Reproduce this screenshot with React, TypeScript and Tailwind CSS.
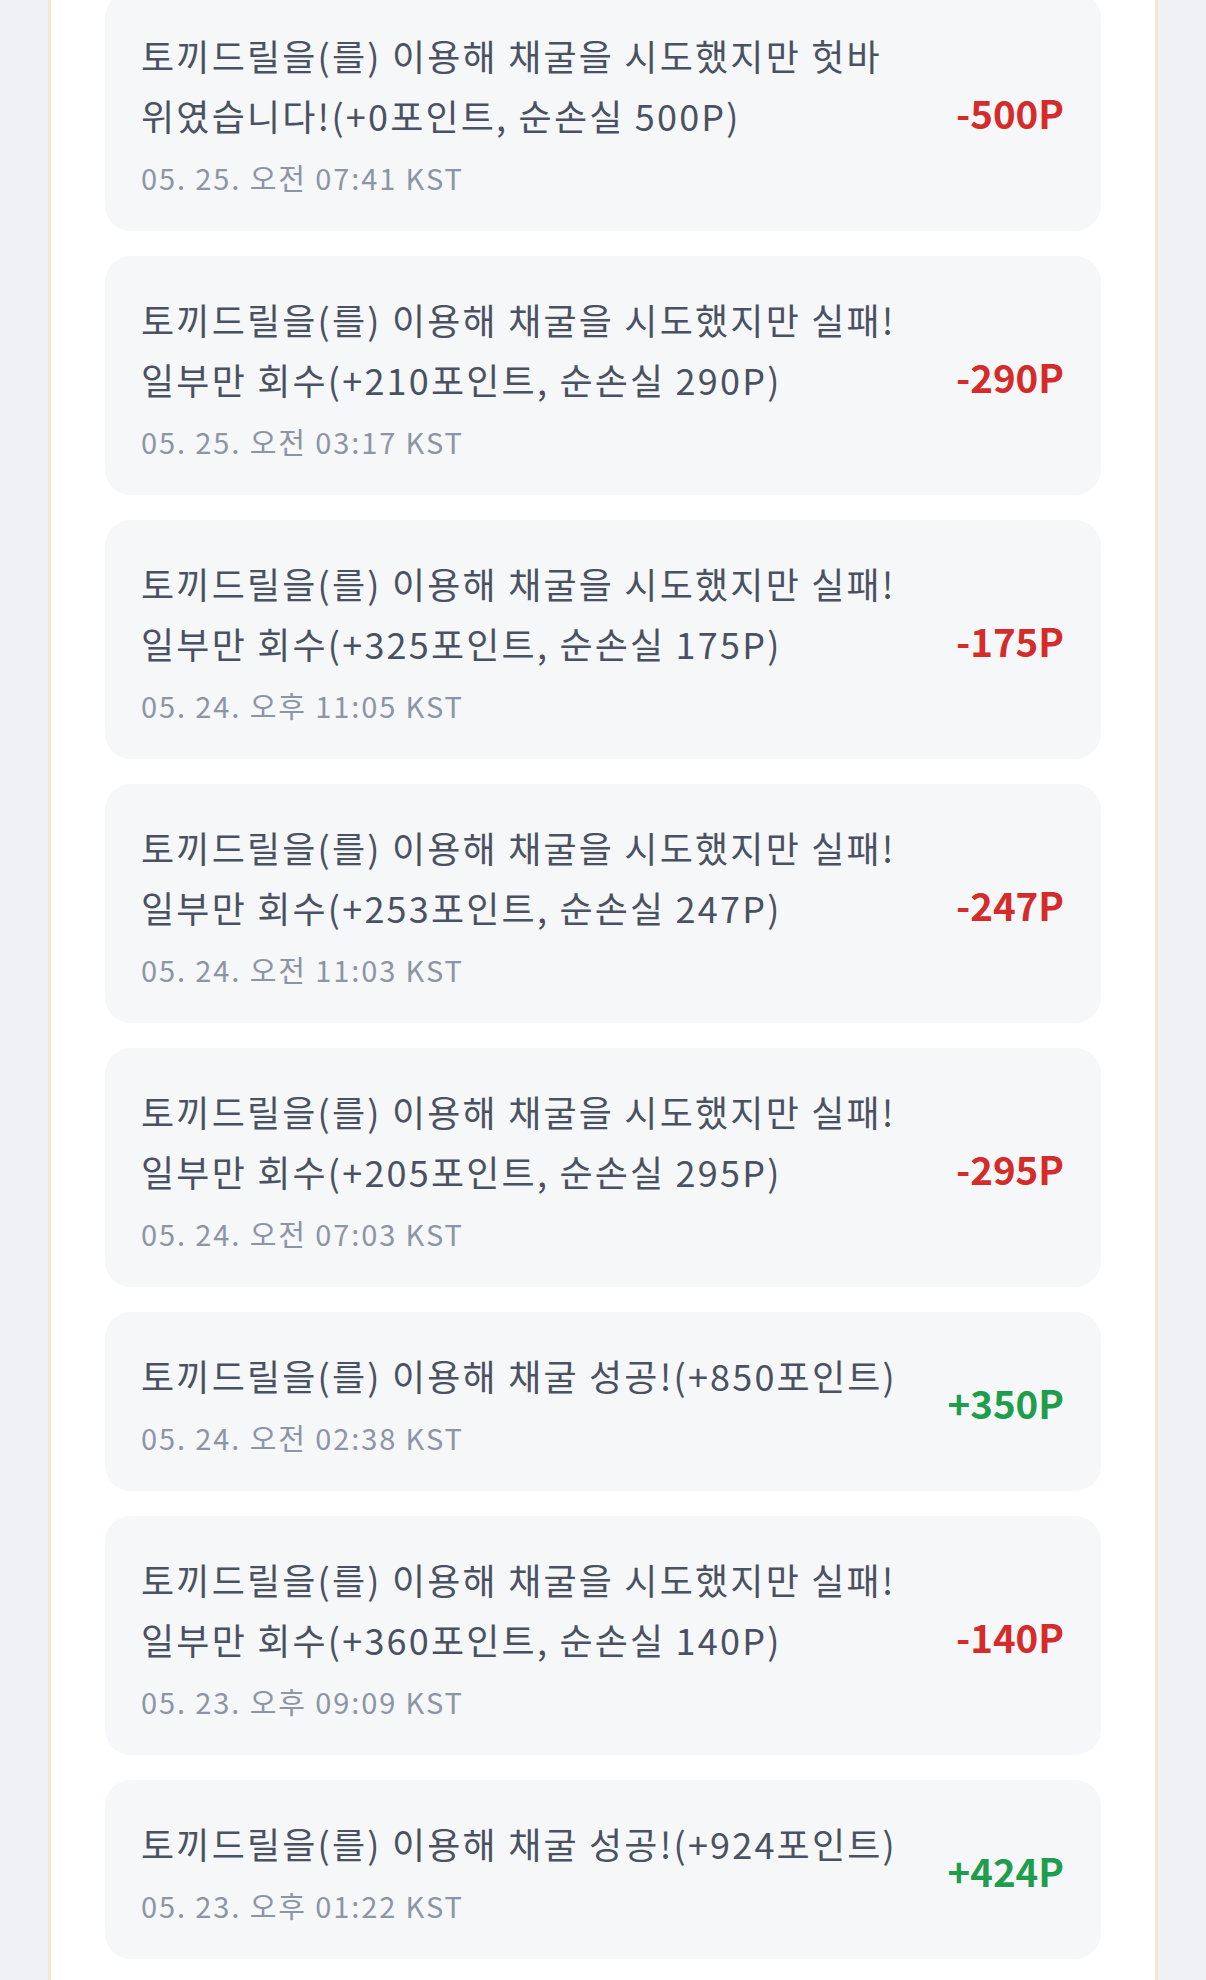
import React from "react";

type Item = { text: string; date: string; amount: string; positive: boolean };

const items: Item[] = [
  { text: "토끼드릴을(를) 이용해 채굴을 시도했지만 헛바위였습니다!(+0포인트, 순손실 500P)", date: "05. 25. 오전 07:41 KST", amount: "-500P", positive: false },
  { text: "토끼드릴을(를) 이용해 채굴을 시도했지만 실패! 일부만 회수(+210포인트, 순손실 290P)", date: "05. 25. 오전 03:17 KST", amount: "-290P", positive: false },
  { text: "토끼드릴을(를) 이용해 채굴을 시도했지만 실패! 일부만 회수(+325포인트, 순손실 175P)", date: "05. 24. 오후 11:05 KST", amount: "-175P", positive: false },
  { text: "토끼드릴을(를) 이용해 채굴을 시도했지만 실패! 일부만 회수(+253포인트, 순손실 247P)", date: "05. 24. 오전 11:03 KST", amount: "-247P", positive: false },
  { text: "토끼드릴을(를) 이용해 채굴을 시도했지만 실패! 일부만 회수(+205포인트, 순손실 295P)", date: "05. 24. 오전 07:03 KST", amount: "-295P", positive: false },
  { text: "토끼드릴을(를) 이용해 채굴 성공!(+850포인트)", date: "05. 24. 오전 02:38 KST", amount: "+350P", positive: true },
  { text: "토끼드릴을(를) 이용해 채굴을 시도했지만 실패! 일부만 회수(+360포인트, 순손실 140P)", date: "05. 23. 오후 09:09 KST", amount: "-140P", positive: false },
  { text: "토끼드릴을(를) 이용해 채굴 성공!(+924포인트)", date: "05. 23. 오후 01:22 KST", amount: "+424P", positive: true },
];

export default function App() {
  return (
    <div
      className="min-h-[1980px] w-full bg-[#eff1f5] overflow-hidden"
      style={{ fontFamily: '"Noto Sans CJK KR", "Noto Sans", sans-serif' }}
    >
      <div className="mx-[48px] min-h-[1990px] -mt-[8px] border-l-[3px] border-r-[3px] border-l-[#fbe5cf] border-r-[#f2e6d5] bg-white px-[54px]">
        <div className="flex flex-col gap-[25px]">
          {items.map((it, i) => (
            <div
              key={i}
              className="flex items-center rounded-[26px] bg-[#f6f7f9] pl-[36px] pr-[37px] pt-[33px] pb-[32px]"
            >
              <div className="min-w-0 flex-1 pr-[40px]">
                <div className="text-[36px] leading-[60px] tracking-[2.2px] text-[#4a5262]">{it.text}</div>
                <div className="mt-[10px] text-[29px] leading-[44px] tracking-[1.9px] text-[#8c95a4]">{it.date}</div>
              </div>
              <div
                className={
                  "shrink-0 text-[38.5px] font-bold leading-[44px] " +
                  (it.positive ? "text-[#1f9d4c]" : "text-[#d42b2b]")
                }
              >
                {it.amount}
              </div>
            </div>
          ))}
        </div>
      </div>
    </div>
  );
}
